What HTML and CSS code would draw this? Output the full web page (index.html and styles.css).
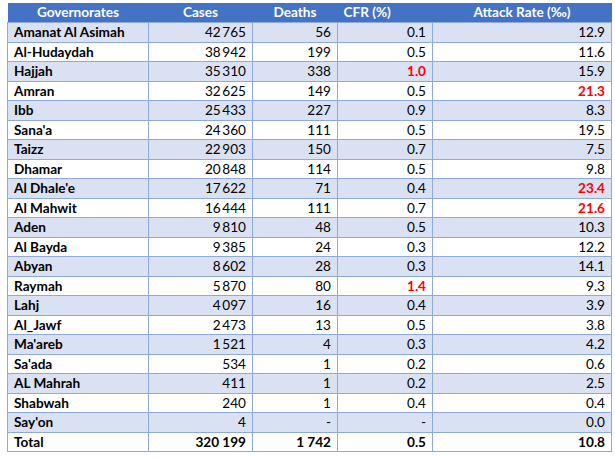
FILE: index.html
```html
<!DOCTYPE html>
<html>
<head>
<meta charset="utf-8">
<link rel="stylesheet" href="styles.css">
</head>
<body>
<table class="data">
  <colgroup>
    <col class="c-gov"><col class="c-cases"><col class="c-deaths"><col class="c-cfr"><col class="c-ar">
  </colgroup>
  <thead>
    <tr><th>Governorates</th><th>Cases</th><th>Deaths</th><th class="left">CFR (%)</th><th>Attack Rate (‰)</th></tr>
  </thead>
  <tbody>
    <tr><td class="name">Amanat Al Asimah</td><td>42&#8201;765</td><td>56</td><td>0.1</td><td>12.9</td></tr>
    <tr><td class="name">Al-Hudaydah</td><td>38&#8201;942</td><td>199</td><td>0.5</td><td>11.6</td></tr>
    <tr><td class="name">Hajjah</td><td>35&#8201;310</td><td>338</td><td class="hi">1.0</td><td>15.9</td></tr>
    <tr><td class="name">Amran</td><td>32&#8201;625</td><td>149</td><td>0.5</td><td class="hi">21.3</td></tr>
    <tr><td class="name">Ibb</td><td>25&#8201;433</td><td>227</td><td>0.9</td><td>8.3</td></tr>
    <tr><td class="name">Sana'a</td><td>24&#8201;360</td><td>111</td><td>0.5</td><td>19.5</td></tr>
    <tr><td class="name">Taizz</td><td>22&#8201;903</td><td>150</td><td>0.7</td><td>7.5</td></tr>
    <tr><td class="name">Dhamar</td><td>20&#8201;848</td><td>114</td><td>0.5</td><td>9.8</td></tr>
    <tr><td class="name">Al Dhale'e</td><td>17&#8201;622</td><td>71</td><td>0.4</td><td class="hi">23.4</td></tr>
    <tr><td class="name">Al Mahwit</td><td>16&#8201;444</td><td>111</td><td>0.7</td><td class="hi">21.6</td></tr>
    <tr><td class="name">Aden</td><td>9&#8201;810</td><td>48</td><td>0.5</td><td>10.3</td></tr>
    <tr><td class="name">Al Bayda</td><td>9&#8201;385</td><td>24</td><td>0.3</td><td>12.2</td></tr>
    <tr><td class="name">Abyan</td><td>8&#8201;602</td><td>28</td><td>0.3</td><td>14.1</td></tr>
    <tr><td class="name">Raymah</td><td>5&#8201;870</td><td>80</td><td class="hi">1.4</td><td>9.3</td></tr>
    <tr><td class="name">Lahj</td><td>4&#8201;097</td><td>16</td><td>0.4</td><td>3.9</td></tr>
    <tr><td class="name">Al_Jawf</td><td>2&#8201;473</td><td>13</td><td>0.5</td><td>3.8</td></tr>
    <tr><td class="name">Ma'areb</td><td>1&#8201;521</td><td>4</td><td>0.3</td><td>4.2</td></tr>
    <tr><td class="name">Sa'ada</td><td>534</td><td>1</td><td>0.2</td><td>0.6</td></tr>
    <tr><td class="name">AL Mahrah</td><td>411</td><td>1</td><td>0.2</td><td>2.5</td></tr>
    <tr><td class="name">Shabwah</td><td>240</td><td>1</td><td>0.4</td><td>0.4</td></tr>
    <tr><td class="name">Say'on</td><td>4</td><td>-</td><td>-</td><td>0.0</td></tr>
    <tr class="total"><td class="name">Total</td><td>320 199</td><td>1 742</td><td>0.5</td><td>10.8</td></tr>
  </tbody>
</table>
</body>
</html>
```
FILE: styles.css
```css
html, body {
  margin: 0;
  padding: 0;
  background: #ffffff;
}
body {
  padding: 3px 0 0 7px;
  font-family: Lato, "Open Sans", sans-serif;
  font-size: 13.6px;
  color: #000000;
}
.data {
  border-collapse: collapse;
  table-layout: fixed;
  width: 604px;
}
.c-gov { width: 141px; }
.c-cases { width: 104px; }
.c-deaths { width: 85px; }
.c-cfr { width: 95px; }
.c-ar { width: 179px; }
.data th {
  background: #4472c4;
  color: #ffffff;
  font-weight: bold;
  height: 19px;
  padding: 0 6px;
  text-align: center;
  border-bottom: 1px solid #8ea9db;
  line-height: 19px;
}
.data th.left {
  text-align: left;
}
.data td {
  height: 18.5px;
  padding: 0 6px;
  line-height: 18px;
  text-align: right;
  border: 1px solid #8ea9db;
  white-space: nowrap;
}
.data td.name {
  text-align: left;
  font-weight: bold;
}
.data tbody tr:nth-child(odd) td {
  background: #d9e1f2;
}
.data td.hi {
  color: #ff0000;
  font-weight: bold;
}
.data tr.total td {
  font-weight: bold;
}
```
